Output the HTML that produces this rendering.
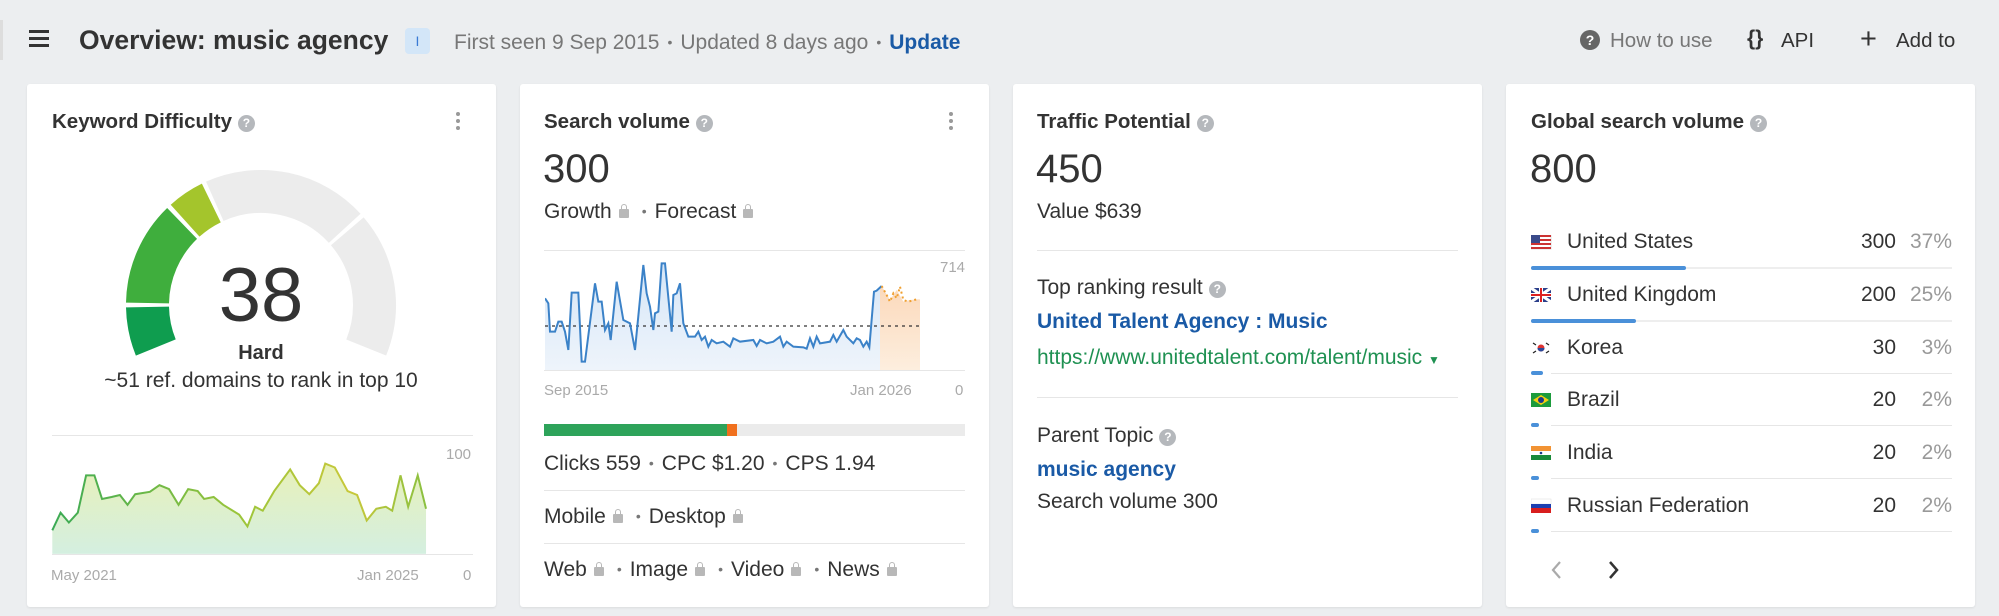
<!DOCTYPE html>
<html><head><meta charset="utf-8"><style>
*{margin:0;padding:0;box-sizing:border-box}
body{width:1999px;height:616px;background:#eceef0;font-family:"Liberation Sans",Arial,sans-serif;color:#333;position:relative;overflow:hidden}
.a{position:absolute;white-space:nowrap}
.card{position:absolute;top:84px;width:469px;height:523px;background:#fff;border-radius:3px;box-shadow:0 1px 2px rgba(0,0,0,.08)}
.t{font-weight:bold;font-size:20.5px;color:#333}
.q{display:inline-block;width:17px;height:17px;border-radius:50%;background:#b5b8bc;color:#fff;font-size:12px;font-weight:bold;text-align:center;line-height:17px;vertical-align:1px;margin-left:6px}
.big{font-size:40px;color:#333}
.m{font-size:21px;color:#333}
.g{color:#999}
.lock{display:inline-block;width:10px;height:9px;background:#b8b8b8;border-radius:1px;position:relative;margin:0 5px 0 7px;vertical-align:0}
.lock:before{content:"";position:absolute;left:2px;top:-5px;width:4px;height:5px;border:1.5px solid #b8b8b8;border-bottom:none;border-radius:3px 3px 0 0}
.dot{color:#777;margin:0 8px;font-size:14px;vertical-align:2px}
.hl{position:absolute;height:1px;background:#e6e6e6}
.kb{position:absolute;width:4px}
.kb i{display:block;width:4px;height:4px;border-radius:50%;background:#999;margin-bottom:3px}
.lbl{font-size:15px;color:#aaa}
.blue{color:#1a5aa6;font-weight:bold}
.bar{position:absolute;height:4px;background:#4a90d9;border-radius:2px}
</style></head><body>
<!-- header -->
<div class="a" style="left:29px;top:30px;width:20px;height:3px;background:#333;box-shadow:0 7px 0 #333,0 14px 0 #333"></div>
<div class="a" style="left:79px;top:25px;font-size:26.5px;font-weight:bold;color:#333">Overview: music agency</div>
<div class="a" style="left:405px;top:28px;width:25px;height:26px;background:#d3e6f8;border-radius:4px;color:#3a7bd5;font-size:14px;text-align:center;line-height:26px">I</div>
<div class="a" style="left:454px;top:31px;font-size:21px;color:#777">First seen 9 Sep 2015<span class="dot">•</span>Updated 8 days ago<span class="dot">•</span><b style="color:#1a5aa6">Update</b></div>
<div class="a" style="left:1580px;top:30px;width:20px;height:20px;border-radius:50%;background:#666;color:#fff;font-size:14px;font-weight:bold;text-align:center;line-height:20px">?</div>
<div class="a" style="left:1610px;top:29px;font-size:20.5px;color:#777">How to use</div>
<div class="a" style="left:1747px;top:27px;font-size:21px;font-weight:bold;color:#333">{}</div>
<div class="a" style="left:1781px;top:29px;font-size:20.5px;color:#333">API</div>
<div class="a" style="left:1860px;top:23px;font-size:29px;color:#333">+</div>
<div class="a" style="left:1896px;top:29px;font-size:20.5px;color:#333">Add to</div>
<div class="a" style="left:0;top:20px;width:3px;height:40px;background:#ddd"></div>

<!-- card 1 -->
<div class="card" style="left:27px"></div>
<div class="a t" style="left:52px;top:110px">Keyword Difficulty<span class="q">?</span></div>
<div class="kb" style="left:456px;top:112px"><i></i><i></i><i></i></div>
<svg class="a" style="left:0;top:0" width="500" height="420">
<g fill="none" stroke-width="43">
<path d="M155.8 347.5 A113.5 113.5 0 0 1 147.5 307" stroke="#0f9d4f"/>
<path d="M147.5 303 A113.5 113.5 0 0 1 182.1 223.4" stroke="#3fae3d"/>
<path d="M185.1 220.7 A113.5 113.5 0 0 1 211.3 203" stroke="#a4c52c"/>
<path d="M214.8 201.3 A113.5 113.5 0 0 1 344.7 228.3" stroke="#ececec"/>
<path d="M347.3 231.3 A113.5 113.5 0 0 1 366.2 347.5" stroke="#ececec"/>
</g></svg>
<div class="a" style="left:0;width:522px;text-align:center;top:252px;font-size:76px;color:#333">38</div>
<div class="a" style="left:0;width:522px;text-align:center;top:342px;font-size:20px;font-weight:bold">Hard</div>
<div class="a" style="left:0;width:522px;text-align:center;top:369px;font-size:21px">~51 ref. domains to rank in top 10</div>
<div class="hl" style="left:52px;top:435px;width:421px"></div>
<div class="a lbl" style="left:446px;top:446px">100</div>
<div class="a lbl" style="left:51px;top:567px">May 2021</div>
<div class="a lbl" style="left:357px;top:567px">Jan 2025</div>
<div class="a lbl" style="left:463px;top:567px">0</div>
<svg class="a" style="left:0;top:0" width="1000" height="616" viewBox="0 0 1568 1568" preserveAspectRatio="none">
<defs><linearGradient id="kg" x1="0" y1="0" x2="0" y2="1"><stop offset="0" stop-color="#e8f0b8"/><stop offset="1" stop-color="#d4efe0"/></linearGradient>
<linearGradient id="kl" x1="0" y1="0" x2="1" y2="0"><stop offset="0" stop-color="#3aaa55"/><stop offset=".5" stop-color="#9bc53a"/><stop offset=".8" stop-color="#c8c83a"/><stop offset="1" stop-color="#8ac040"/></linearGradient></defs>
<path d="M82 1410 L82 1350 95 1305 108 1330 122 1305 135 1210 148 1210 160 1270 175 1265 188 1260 200 1285 212 1258 235 1252 250 1235 265 1245 280 1285 295 1245 310 1250 320 1270 335 1265 350 1285 375 1310 388 1340 400 1290 412 1300 430 1250 455 1195 470 1235 485 1258 500 1230 510 1180 525 1190 545 1250 560 1260 575 1325 590 1295 605 1290 615 1300 628 1210 640 1290 655 1210 668 1295 L668 1410Z" fill="url(#kg)"/>
<polyline points="82,1350 95,1305 108,1330 122,1305 135,1210 148,1210 160,1270 175,1265 188,1260 200,1285 212,1258 235,1252 250,1235 265,1245 280,1285 295,1245 310,1250 320,1270 335,1265 350,1285 375,1310 388,1340 400,1290 412,1300 430,1250 455,1195 470,1235 485,1258 500,1230 510,1180 525,1190 545,1250 560,1260 575,1325 590,1295 605,1290 615,1300 628,1210 640,1290 655,1210 668,1295" fill="none" stroke="url(#kl)" stroke-width="2" vector-effect="non-scaling-stroke"/>
</svg>
<div class="hl" style="left:52px;top:554px;width:421px"></div>

<!-- card 2 -->
<div class="card" style="left:520px"></div>
<div class="a t" style="left:544px;top:110px">Search volume<span class="q">?</span></div>
<div class="kb" style="left:949px;top:112px"><i></i><i></i><i></i></div>
<div class="a big" style="left:543px;top:147px">300</div>
<div class="a m" style="left:544px;top:200px">Growth<span class="lock"></span><span class="dot">•</span>Forecast<span class="lock"></span></div>
<div class="hl" style="left:544px;top:250px;width:421px"></div>
<svg class="a" style="left:545px;top:240px" width="375" height="140" viewBox="75 0 1125 420" preserveAspectRatio="none">
<defs><linearGradient id="bg" x1="0" y1="0" x2="0" y2="1"><stop offset="0" stop-color="#d6e6f7"/><stop offset="1" stop-color="#eef4fb"/></linearGradient>
<linearGradient id="og" x1="0" y1="0" x2="0" y2="1"><stop offset="0" stop-color="#fbd9bb"/><stop offset="1" stop-color="#fdeede"/></linearGradient></defs>
<path d="M75 390 L75 175 85 190 90 275 105 275 115 245 125 245 135 275 145 330 155 158 175 158 185 365 195 365 225 130 235 185 245 185 255 270 265 250 272 300 290 125 310 240 330 250 345 330 370 75 380 160 390 200 400 270 405 220 415 215 425 70 435 70 455 275 460 165 470 160 480 130 490 250 505 290 525 290 535 275 545 300 555 290 565 320 575 300 590 310 610 305 630 320 640 295 660 305 700 300 710 318 720 300 740 310 760 305 780 290 790 320 800 305 820 320 850 322 860 326 870 295 880 320 890 290 900 310 930 305 940 285 950 305 970 270 980 290 1000 310 1010 295 1020 300 1030 320 1040 305 1048 322 1062 155 1070 152 1080 145 L1080 390Z" fill="url(#bg)"/>
<path d="M1080 145 1085 138 1110 180 1130 150 1150 185 1170 180 1190 178 L1200 178 1200 390 1080 390Z" fill="url(#og)"/>
<line x1="75" y1="258" x2="1200" y2="258" stroke="#333" stroke-width="1.3" stroke-dasharray="3 4" vector-effect="non-scaling-stroke"/>
<polyline points="75,175 85,190 90,275 105,275 115,245 125,245 135,275 145,330 155,158 175,158 185,365 195,365 225,130 235,185 245,185 255,270 265,250 272,300 290,125 310,240 330,250 345,330 370,75 380,160 390,200 400,270 405,220 415,215 425,70 435,70 455,275 460,165 470,160 480,130 490,250 505,290 525,290 535,275 545,300 555,290 565,320 575,300 590,310 610,305 630,320 640,295 660,305 700,300 710,318 720,300 740,310 760,305 780,290 790,320 800,305 820,320 850,322 860,326 870,295 880,320 890,290 900,310 930,305 940,285 950,305 970,270 980,290 1000,310 1010,295 1020,300 1030,320 1040,305 1048,322 1062,155 1070,152 1085,138" fill="none" stroke="#3b82c8" stroke-width="2" vector-effect="non-scaling-stroke"/>
<polyline points="1085,138 1100,165 1110,185 1120,160 1130,175 1140,140 1150,180 1165,185 1190,178" fill="none" stroke="#f0a030" stroke-width="2" stroke-dasharray="2 3" vector-effect="non-scaling-stroke"/>
</svg>
<div class="a lbl" style="left:940px;top:259px">714</div>
<div class="hl" style="left:544px;top:370px;width:421px"></div>
<div class="a lbl" style="left:544px;top:382px">Sep 2015</div>
<div class="a lbl" style="left:850px;top:382px">Jan 2026</div>
<div class="a lbl" style="left:955px;top:382px">0</div>
<div class="a" style="left:544px;top:424px;width:421px;height:12px;background:#ebebeb"></div>
<div class="a" style="left:544px;top:424px;width:183px;height:12px;background:#2ea35a"></div>
<div class="a" style="left:727px;top:424px;width:10px;height:12px;background:#f0701e"></div>
<div class="a m" style="left:544px;top:452px">Clicks 559<span class="dot">•</span>CPC $1.20<span class="dot">•</span>CPS 1.94</div>
<div class="hl" style="left:544px;top:490px;width:421px"></div>
<div class="a m" style="left:544px;top:505px">Mobile<span class="lock"></span><span class="dot">•</span>Desktop<span class="lock"></span></div>
<div class="hl" style="left:544px;top:543px;width:421px"></div>
<div class="a m" style="left:544px;top:558px">Web<span class="lock"></span><span class="dot">•</span>Image<span class="lock"></span><span class="dot">•</span>Video<span class="lock"></span><span class="dot">•</span>News<span class="lock"></span></div>

<!-- card 3 -->
<div class="card" style="left:1013px"></div>
<div class="a t" style="left:1037px;top:110px">Traffic Potential<span class="q">?</span></div>
<div class="a big" style="left:1036px;top:147px">450</div>
<div class="a m" style="left:1037px;top:200px">Value $639</div>
<div class="hl" style="left:1037px;top:250px;width:421px"></div>
<div class="a m" style="left:1037px;top:276px">Top ranking result<span class="q">?</span></div>
<div class="a m blue" style="left:1037px;top:310px">United Talent Agency : Music</div>
<div class="a m" style="left:1037px;top:346px;color:#1f9152">https://www.unitedtalent.com/talent/music <span style="font-size:12px">▼</span></div>
<div class="hl" style="left:1037px;top:397px;width:421px"></div>
<div class="a m" style="left:1037px;top:424px">Parent Topic<span class="q">?</span></div>
<div class="a m blue" style="left:1037px;top:458px">music agency</div>
<div class="a m" style="left:1037px;top:490px">Search volume 300</div>

<!-- card 4 -->
<div class="card" style="left:1506px"></div>
<div class="a t" style="left:1531px;top:110px">Global search volume<span class="q">?</span></div>
<div class="a big" style="left:1530px;top:147px">800</div>
<svg class="a" style="left:1531px;top:235px" width="22" height="290">
<g><rect y="0" width="20" height="14" fill="#fff" stroke="#ddd"/><rect y="0" width="20" height="2" fill="#c33"/><rect y="4" width="20" height="2" fill="#c33"/><rect y="8" width="20" height="2" fill="#c33"/><rect y="12" width="20" height="2" fill="#c33"/><rect width="9" height="8" fill="#3a4a8a"/></g>
<g transform="translate(0,53)"><rect width="20" height="14" fill="#2a3f8a"/><path d="M0 0L20 14M20 0L0 14" stroke="#fff" stroke-width="3"/><path d="M10 0V14M0 7H20" stroke="#fff" stroke-width="4"/><path d="M10 0V14M0 7H20" stroke="#d22" stroke-width="2"/></g>
<g transform="translate(0,106)"><rect width="20" height="14" fill="#fff"/><circle cx="10" cy="7" r="3.5" fill="#d33"/><path d="M10 7m-3.5 0a3.5 3.5 0 0 0 7 0z" fill="#2a4a9a"/><path d="M2 2l3 2M15 2l3 2M2 12l3-2M15 12l3-2" stroke="#222" stroke-width="1.2"/></g>
<g transform="translate(0,158)"><rect width="20" height="14" fill="#1c9b3c"/><path d="M10 2L18 7 10 12 2 7z" fill="#f5d010"/><circle cx="10" cy="7" r="3" fill="#1c3a8a"/></g>
<g transform="translate(0,211)"><rect width="20" height="5" fill="#f29333"/><rect y="5" width="20" height="4" fill="#fff"/><rect y="9" width="20" height="5" fill="#1a8a3a"/><circle cx="10" cy="7" r="1.3" fill="#1a3a8a"/></g>
<g transform="translate(0,264)"><rect width="20" height="5" fill="#fff" stroke="#ddd" stroke-width=".5"/><rect y="5" width="20" height="4" fill="#1c3fb0"/><rect y="9" width="20" height="5" fill="#d81e1e"/></g>
</svg>
<div>
<div class="a m" style="left:1567px;top:230px">United States</div><div class="a m" style="left:1850px;top:230px;width:46px;text-align:right">300</div><div class="a m g" style="left:1902px;top:230px;width:50px;text-align:right">37%</div>
<div class="hl" style="left:1531px;top:267px;width:421px;height:2px;background:#eee"></div><div class="bar" style="left:1531px;top:266px;width:155px"></div>
<div class="a m" style="left:1567px;top:283px">United Kingdom</div><div class="a m" style="left:1850px;top:283px;width:46px;text-align:right">200</div><div class="a m g" style="left:1902px;top:283px;width:50px;text-align:right">25%</div>
<div class="hl" style="left:1531px;top:320px;width:421px;height:2px;background:#eee"></div><div class="bar" style="left:1531px;top:319px;width:105px"></div>
<div class="a m" style="left:1567px;top:336px">Korea</div><div class="a m" style="left:1850px;top:336px;width:46px;text-align:right">30</div><div class="a m g" style="left:1902px;top:336px;width:50px;text-align:right">3%</div>
<div class="hl" style="left:1551px;top:373px;width:401px"></div><div class="bar" style="left:1531px;top:371px;width:12px"></div>
<div class="a m" style="left:1567px;top:388px">Brazil</div><div class="a m" style="left:1850px;top:388px;width:46px;text-align:right">20</div><div class="a m g" style="left:1902px;top:388px;width:50px;text-align:right">2%</div>
<div class="hl" style="left:1551px;top:425px;width:401px"></div><div class="bar" style="left:1531px;top:423px;width:8px"></div>
<div class="a m" style="left:1567px;top:441px">India</div><div class="a m" style="left:1850px;top:441px;width:46px;text-align:right">20</div><div class="a m g" style="left:1902px;top:441px;width:50px;text-align:right">2%</div>
<div class="hl" style="left:1551px;top:478px;width:401px"></div><div class="bar" style="left:1531px;top:476px;width:8px"></div>
<div class="a m" style="left:1567px;top:494px">Russian Federation</div><div class="a m" style="left:1850px;top:494px;width:46px;text-align:right">20</div><div class="a m g" style="left:1902px;top:494px;width:50px;text-align:right">2%</div>
<div class="hl" style="left:1551px;top:531px;width:401px"></div><div class="bar" style="left:1531px;top:529px;width:8px"></div>
</div>
<svg class="a" style="left:1548px;top:558px" width="80" height="24"><path d="M12 4L5 12 12 20" fill="none" stroke="#aaa" stroke-width="2.2"/><path d="M62 4L69 12 62 20" fill="none" stroke="#333" stroke-width="2.5"/></svg>
</body></html>
